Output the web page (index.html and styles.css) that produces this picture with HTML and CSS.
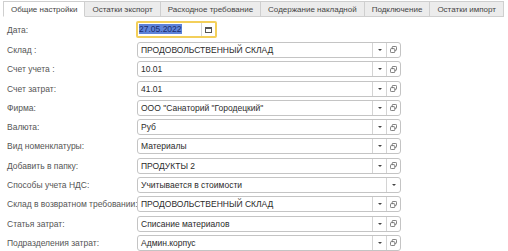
FILE: index.html
```html
<!DOCTYPE html>
<html lang="ru">
<head>
  <meta charset="UTF-8">
  <title>Общие настройки</title>
  <link rel="stylesheet" href="styles.css">
</head>
<body>

<div class="tabs">
  <span class="tab active">Общие настройки</span>
  <span class="tab">Остатки экспорт</span>
  <span class="tab">Расходное требование</span>
  <span class="tab">Содержание накладной</span>
  <span class="tab">Подключение</span>
  <span class="tab">Остатки импорт</span>
</div>

<div class="form">
  <div class="row date-row">
    <label>Дата:</label>
    <div class="field date">
      <span class="val"><span class="sel">27.05.2022</span></span>
      <span class="btn">
        <svg width="7" height="6" viewBox="0 0 7 6"><rect x="0.5" y="0.5" width="6" height="5" fill="none" stroke="#555"/><rect x="0.5" y="0.5" width="6" height="1.5" fill="#555"/></svg>
      </span>
    </div>
  </div>

  <div class="row">
    <label>Склад :</label>
    <div class="field">
      <span class="val">ПРОДОВОЛЬСТВЕННЫЙ СКЛАД</span>
      <span class="btn"><i class="arrow"></i></span>
      <span class="btn"><svg class="copy"><use href="#copy"/></svg></span>
    </div>
  </div>

  <div class="row">
    <label>Счет учета :</label>
    <div class="field">
      <span class="val">10.01</span>
      <span class="btn"><i class="arrow"></i></span>
      <span class="btn"><svg class="copy"><use href="#copy"/></svg></span>
    </div>
  </div>

  <div class="row">
    <label>Счет затрат:</label>
    <div class="field">
      <span class="val">41.01</span>
      <span class="btn"><i class="arrow"></i></span>
      <span class="btn"><svg class="copy"><use href="#copy"/></svg></span>
    </div>
  </div>

  <div class="row">
    <label>Фирма:</label>
    <div class="field">
      <span class="val">ООО "Санаторий "Городецкий"</span>
      <span class="btn"><i class="arrow"></i></span>
      <span class="btn"><svg class="copy"><use href="#copy"/></svg></span>
    </div>
  </div>

  <div class="row">
    <label>Валюта:</label>
    <div class="field">
      <span class="val">Руб</span>
      <span class="btn"><i class="arrow"></i></span>
      <span class="btn"><svg class="copy"><use href="#copy"/></svg></span>
    </div>
  </div>

  <div class="row">
    <label>Вид номенклатуры:</label>
    <div class="field">
      <span class="val">Материалы</span>
      <span class="btn"><i class="arrow"></i></span>
      <span class="btn"><svg class="copy"><use href="#copy"/></svg></span>
    </div>
  </div>

  <div class="row">
    <label>Добавить в папку:</label>
    <div class="field">
      <span class="val">ПРОДУКТЫ 2</span>
      <span class="btn"><i class="arrow"></i></span>
      <span class="btn"><svg class="copy"><use href="#copy"/></svg></span>
    </div>
  </div>

  <div class="row">
    <label>Способы учета НДС:</label>
    <div class="field">
      <span class="val">Учитывается в стоимости</span>
      <span class="btn"><i class="arrow"></i></span>
    </div>
  </div>

  <div class="row">
    <label>Склад в возвратном требовании:</label>
    <div class="field">
      <span class="val">ПРОДОВОЛЬСТВЕННЫЙ СКЛАД</span>
      <span class="btn"><i class="arrow"></i></span>
      <span class="btn"><svg class="copy"><use href="#copy"/></svg></span>
    </div>
  </div>

  <div class="row">
    <label>Статья затрат:</label>
    <div class="field">
      <span class="val">Списание материалов</span>
      <span class="btn"><i class="arrow"></i></span>
      <span class="btn"><svg class="copy"><use href="#copy"/></svg></span>
    </div>
  </div>

  <div class="row">
    <label>Подразделения затрат:</label>
    <div class="field">
      <span class="val">Админ.корпус</span>
      <span class="btn"><i class="arrow"></i></span>
      <span class="btn"><svg class="copy"><use href="#copy"/></svg></span>
    </div>
  </div>
</div>

<svg width="0" height="0" style="position:absolute">
  <symbol id="copy" viewBox="0 0 8 8">
    <rect x="2.5" y="0.5" width="5" height="4.5" rx="1" fill="none" stroke="#666"/>
    <rect x="0.5" y="3" width="5" height="4.5" rx="1" fill="#fff" stroke="#666"/>
  </symbol>
</svg>

</body>
</html>
```

FILE: styles.css
```css
body {
  margin: 0;
  font-family: "Liberation Sans", Arial, sans-serif;
  font-size: 8.5px;
  color: #333;
  background: #fff;
}

.tabs {
  display: flex;
  padding: 1px 0 0 3px;
}

.tab {
  height: 16px;
  line-height: 15px;
  padding: 0 7px;
  box-sizing: border-box;
  border: 1px solid #cfcfcf;
  border-left: none;
  background: #ececec;
  color: #444;
  font-size: 8px;
  white-space: nowrap;
}

.tab.active {
  background: #fff;
  border-left: 1px solid #cfcfcf;
  border-bottom-color: #fff;
}

.form {
  padding: 4px 0 0 7px;
  display: flex;
  flex-direction: column;
  gap: 3.3px;
}

.row {
  display: flex;
  align-items: center;
  height: 16px;
}

.row.date-row {
  height: 17px;
  margin-bottom: 0.7px;
}

.row label {
  width: 130px;
  flex: none;
  color: #555;
  white-space: nowrap;
}

.field {
  width: 264px;
  height: 16px;
  box-sizing: border-box;
  border: 1px solid #c4c4c4;
  border-radius: 3px;
  display: flex;
  align-items: stretch;
  background: #fff;
}

.field.date {
  width: 81px;
  height: 17px;
  margin-left: -1px;
  border: 2px solid #f3cf5a;
  border-radius: 2px;
}

.val {
  flex: 1;
  padding-left: 3px;
  line-height: 14px;
  white-space: nowrap;
  overflow: hidden;
  color: #2b2b2b;
}

.date .val {
  padding-left: 1px;
  line-height: 13px;
}

.sel {
  background: #5f83d9;
  color: #1a2c6e;
}

.btn {
  width: 13px;
  flex: none;
  border-left: 1px solid #d4d4d4;
  display: flex;
  align-items: center;
  justify-content: center;
}

.arrow {
  width: 0;
  height: 0;
  border-left: 2px solid transparent;
  border-right: 2px solid transparent;
  border-top: 2px solid #444;
}

.copy {
  width: 7px;
  height: 7px;
}
```
